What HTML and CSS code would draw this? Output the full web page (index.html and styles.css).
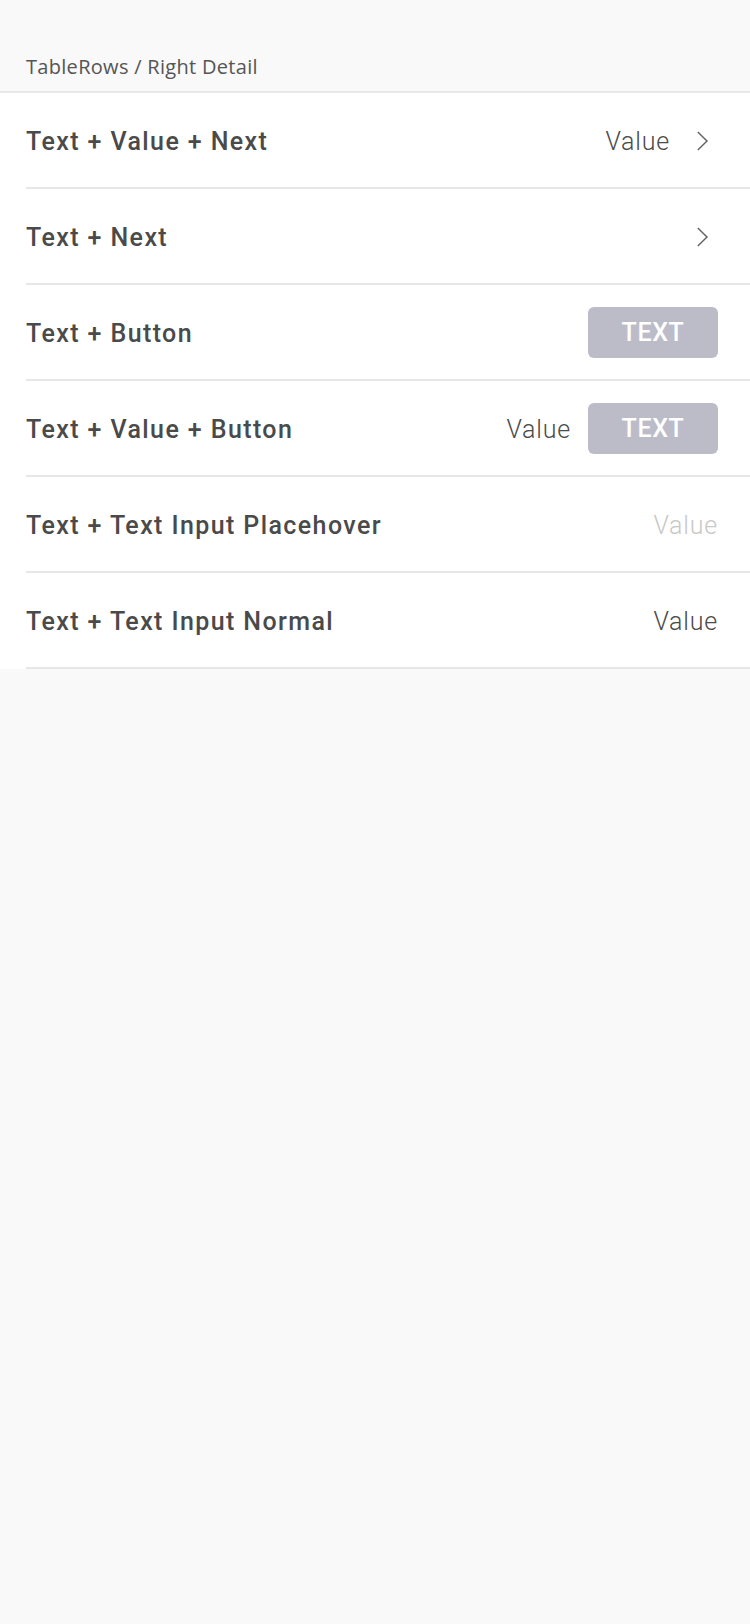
FILE: index.html
```html
<!DOCTYPE html>
<html>
<head>
<meta charset="utf-8">
<link rel="stylesheet" href="styles.css">
</head>
<body>
<header class="page-header"><span class="page-title">TableRows / Right Detail</span></header>
<main class="list">
  <div class="row">
    <span class="row-title">Text + Value + Next</span>
    <span class="row-right"><span class="value">Value</span><svg class="chev" width="28" height="28" viewBox="0 0 28 28"><path d="M7.8 6 L17 15 L7.8 24" fill="none" stroke="#666" stroke-width="1.5"/></svg></span>
  </div>
  <div class="row">
    <span class="row-title">Text + Next</span>
    <span class="row-right"><svg class="chev" width="28" height="28" viewBox="0 0 28 28"><path d="M7.8 6 L17 15 L7.8 24" fill="none" stroke="#666" stroke-width="1.5"/></svg></span>
  </div>
  <div class="row">
    <span class="row-title">Text + Button</span>
    <span class="row-right"><span class="btn">TEXT</span></span>
  </div>
  <div class="row">
    <span class="row-title">Text + Value + Button</span>
    <span class="row-right"><span class="value">Value</span><span class="btn">TEXT</span></span>
  </div>
  <div class="row">
    <span class="row-title">Text + Text Input Placehover</span>
    <span class="row-right"><span class="value placeholder">Value</span></span>
  </div>
  <div class="row">
    <span class="row-title">Text + Text Input Normal</span>
    <span class="row-right"><span class="value">Value</span></span>
  </div>
</main>
</body>
</html>
```
FILE: styles.css
```css
html, body {
  margin: 0;
  padding: 0;
  background: #f9f9f9;
}
body {
  font-family: Roboto, "Liberation Sans", Arial, sans-serif;
  width: 750px;
  min-height: 1624px;
}
.page-header {
  height: 93px;
  box-sizing: border-box;
  padding: 0 0 12px 26px;
  display: flex;
  align-items: flex-end;
  border-bottom: 2px solid #e8e8e8;
}
.page-title {
  font-family: "Open Sans", Lato, sans-serif;
  font-size: 20px;
  line-height: 24px;
  letter-spacing: 0.3px;
  color: #555555;
}
.list {
  background: #ffffff;
  padding-left: 26px;
}
.row {
  height: 94px;
  border-bottom: 2px solid #e6e6e6;
  display: flex;
  align-items: center;
  justify-content: space-between;
  padding-right: 32px;
}
.row-title {
  font-size: 25px;
  font-weight: 500;
  letter-spacing: 1.4px;
  color: #4a4a4a;
  padding-top: 3px;
}
.row-right {
  display: flex;
  align-items: center;
}
.value {
  font-size: 25px;
  font-weight: 300;
  letter-spacing: 0.8px;
  color: #4a4a4a;
  padding-top: 3px;
}
.value.placeholder {
  color: #c8c8c8;
}
.chev {
  display: block;
  margin-left: 20px;
}
.btn {
  width: 130px;
  height: 51px;
  margin-left: 17px;
  border-radius: 6px;
  background: #bcbcc8;
  color: #ffffff;
  font-size: 25px;
  font-weight: 500;
  letter-spacing: 0.6px;
  display: flex;
  align-items: center;
  justify-content: center;
}
```
